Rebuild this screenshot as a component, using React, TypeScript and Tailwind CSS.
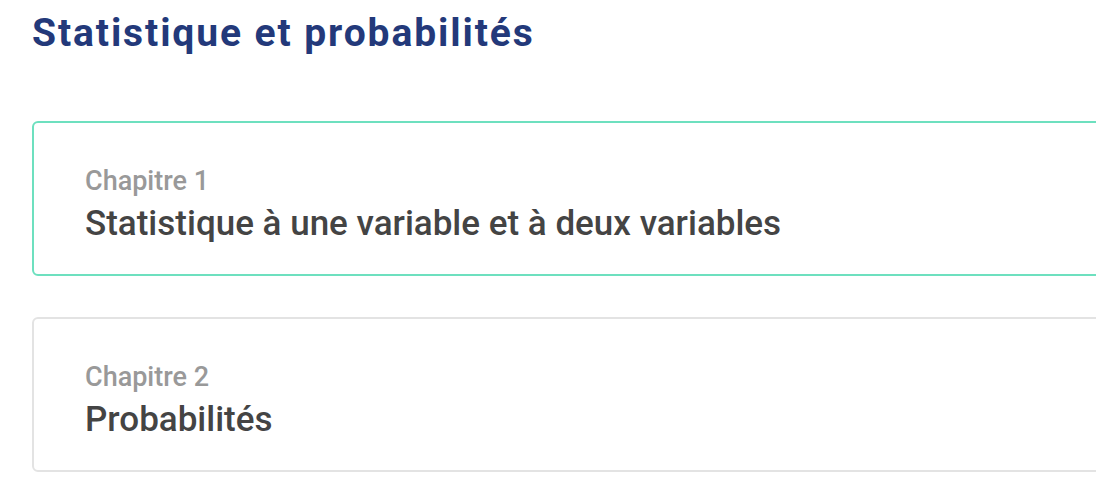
export default function App() {
  const font = { fontFamily: 'Roboto, "Noto Sans", sans-serif' };
  const chapters = [
    { n: 'Chapitre 1', t: 'Statistique à une variable et à deux variables', active: true },
    { n: 'Chapitre 2', t: 'Probabilités', active: false },
  ];
  return (
    <div className="w-[1096px] h-[500px] overflow-hidden bg-white" style={font}>
      <div className="pl-[32px] pt-[10px]">
        <h1 className="text-[39px] leading-[46px] font-bold text-[#23397a] tracking-[1.9px]">
          Statistique et probabilités
        </h1>
        <div className="mt-[65px] flex flex-col gap-[41px] w-[1200px]">
          {chapters.map((c) => (
            <div
              key={c.n}
              className={
                'h-[155px] rounded-[6px] border-2 pl-[51px] pt-[42px] ' +
                (c.active ? 'border-[#6de0bf]' : 'border-[#e3e3e3]')
              }
            >
              <div className="text-[27px] leading-[32px] font-medium text-[#999999]">{c.n}</div>
              <div className="mt-[5px] text-[35px] leading-[44px] font-medium text-[#444444]">{c.t}</div>
            </div>
          ))}
        </div>
      </div>
    </div>
  );
}
